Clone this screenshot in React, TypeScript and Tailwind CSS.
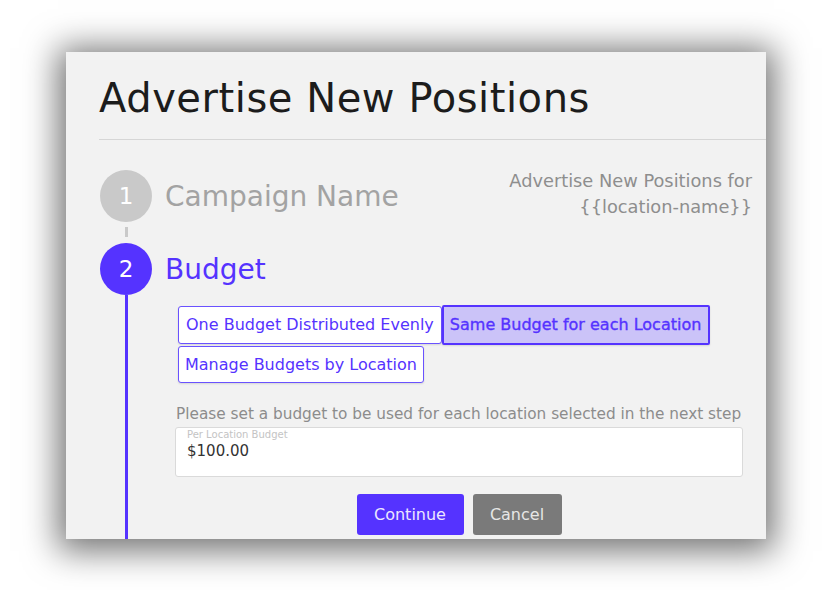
import React from "react";

export default function App() {
  return (
    <div className="w-[836px] h-[590px] bg-white pt-[52px] pl-[66px] font-['DejaVu_Sans',sans-serif] overflow-hidden">
      <div className="w-[700px] h-[487px] bg-[#f2f2f2] overflow-hidden pl-[33px] shadow-[0_4px_32px_8px_rgba(0,0,0,0.55)]">
        <h1 className="pt-[22px] text-[40px] leading-[48px] tracking-[0.55px] text-[#1c1c1c] font-normal whitespace-nowrap">
          Advertise New Positions
        </h1>
        <div className="mt-[17px] h-px bg-[#d6d6d6]" />

        {/* Step 1 */}
        <div className="mt-[30px] pr-[14px] flex items-start">
          <div className="ml-px w-[52px] h-[52px] rounded-full bg-[#c9c9c9] flex items-center justify-center text-white text-[23px] leading-none">
            1
          </div>
          <div className="ml-[13px] h-[52px] flex items-center text-[28px] leading-[33px] text-[#a3a3a3] whitespace-nowrap">
            Campaign Name
          </div>
          <div className="ml-auto -mt-[2px] text-right text-[17.8px] leading-[26px] text-[#8e8e8e] whitespace-nowrap">
            <div>Advertise New Positions for</div>
            <div>{"{{location-name}}"}</div>
          </div>
        </div>

        {/* connector */}
        <div className="ml-px w-[52px] h-[21px] flex justify-center">
          <div className="mt-[5px] w-[3px] h-[10px] bg-[#c9c9c9]" />
        </div>

        {/* Step 2 */}
        <div className="flex items-center">
          <div className="ml-px w-[52px] h-[52px] rounded-full bg-[#5533ff] flex items-center justify-center text-white text-[23px] leading-none">
            2
          </div>
          <div className="ml-[13px] h-[52px] flex items-center text-[28px] leading-[33px] text-[#5533ff] whitespace-nowrap">
            Budget
          </div>
        </div>

        <div className="flex">
          <div className="ml-px w-[52px] flex justify-center">
            <div className="w-[3px] bg-[#5533ff]" />
          </div>
          <div className="ml-[23px] w-[568px] pt-[10px] pb-[20px]">
            <div className="ml-[3px] flex flex-wrap items-center gap-y-px">
              <button className="h-[38px] px-[7px] border border-[#6a52ff] bg-white rounded-[3px] text-[16px] text-[#5533ff] whitespace-nowrap shadow-[0_1px_2px_rgba(0,0,0,0.12)]">
                One Budget Distributed Evenly
              </button>
              <button className="h-[40px] pl-[6px] pr-[7px] border-2 border-[#5533ff] bg-[#cbc3f8] rounded-[2px] text-[16px] text-[#5533ff] whitespace-nowrap [-webkit-text-stroke:0.35px_#5533ff] shadow-[0_1px_2px_rgba(0,0,0,0.12)]">
                Same Budget for each Location
              </button>
              <button className="h-[37px] px-[6px] border border-[#6a52ff] bg-white rounded-[3px] text-[16px] text-[#5533ff] whitespace-nowrap shadow-[0_1px_2px_rgba(0,0,0,0.12)]">
                Manage Budgets by Location
              </button>
            </div>

            <p className="mt-[21px] ml-px text-[15.3px] leading-[20px] text-[#8c8c8c] whitespace-nowrap">
              Please set a budget to be used for each location selected in the next step
            </p>

            <div className="mt-[3px] h-[50px] bg-white border border-[#dadada] rounded-[3px] pl-[11px] pt-px">
              <div className="text-[10px] leading-[12px] text-[#c4c4c4]">Per Location Budget</div>
              <div className="text-[15px] leading-[20px] text-[#333333]">$100.00</div>
            </div>

            <div className="mt-[17px] flex justify-center gap-[9px]">
              <button className="w-[107px] h-[41px] rounded-[3px] bg-[#5533ff] text-[16px] text-[#ebe6ff]">
                Continue
              </button>
              <button className="w-[89px] h-[41px] rounded-[3px] bg-[#7a7a7a] text-[16px] text-[#e6e6e6]">
                Cancel
              </button>
            </div>
          </div>
        </div>
      </div>
    </div>
  );
}
